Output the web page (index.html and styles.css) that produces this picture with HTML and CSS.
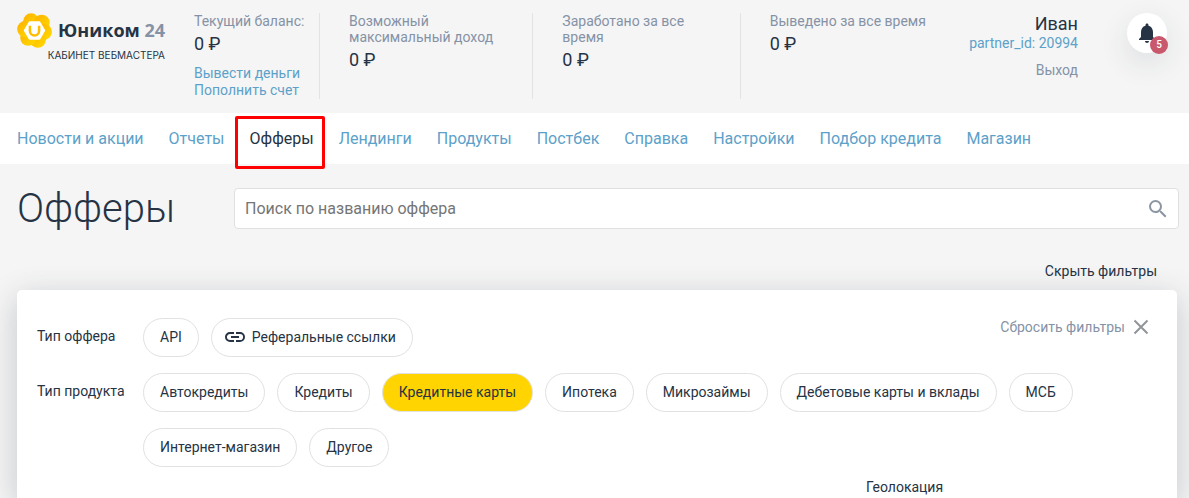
FILE: index.html
```html
<!DOCTYPE html>
<html lang="ru">
<head>
<meta charset="utf-8">
<meta name="viewport" content="width=device-width, initial-scale=1">
<title>Офферы</title>
<link rel="stylesheet" href="styles.css">
</head>
<body>
<div class="page">
  <header class="header">
    <a class="brand" href="#">
      <span class="brand-row">
        <svg class="brand-mark" viewBox="0 0 36 36" aria-hidden="true">
          <defs>
            <linearGradient id="petal" x1="0" y1="0" x2="1" y2="1">
              <stop offset="0" stop-color="#ffb000"/>
              <stop offset="1" stop-color="#ffdc00"/>
            </linearGradient>
          </defs>
          <g fill="url(#petal)">
            <circle cx="18" cy="18" r="15"/>
            <circle cx="14.500" cy="8.500" r="8.200"/>
            <circle cx="25.500" cy="10" r="8.200"/>
            <circle cx="27.700" cy="19.500" r="8.200"/>
            <circle cx="21.500" cy="27.600" r="8.200"/>
            <circle cx="11.500" cy="25.500" r="8.200"/>
            <circle cx="8.300" cy="16.500" r="8.200"/>
          </g>
          <path d="M13 9.500h10l5 8.500-5 8.500H13L8 18z" fill="#fff" stroke="#fff" stroke-width="2" stroke-linejoin="round"/>
          <path d="M13.300 13v5.500a4.700 4.700 0 0 0 9.400 0V13" fill="none" stroke="#ffbd00" stroke-width="2.600"/>
        </svg>
        <span class="brand-name">Юником <span class="brand-num">24</span></span>
      </span>
      <span class="brand-sub">КАБИНЕТ ВЕБМАСТЕРА</span>
    </a>
    <div class="stats">
      <div class="stat">
        <div class="stat-label">Текущий баланс:</div>
        <div class="stat-value">0 ₽</div>
        <div class="stat-links"><a href="#">Вывести деньги</a><a href="#">Пополнить счет</a></div>
      </div>
      <div class="stat">
        <div class="stat-label">Возможный максимальный доход</div>
        <div class="stat-value">0 ₽</div>
      </div>
      <div class="stat">
        <div class="stat-label">Заработано за все время</div>
        <div class="stat-value">0 ₽</div>
      </div>
      <div class="stat">
        <div class="stat-label">Выведено за все время</div>
        <div class="stat-value">0 ₽</div>
      </div>
    </div>
    <div class="user">
      <div class="user-name">Иван</div>
      <a class="user-id" href="#">partner_id: 20994</a>
      <a class="user-exit" href="#">Выход</a>
    </div>
    <button class="bell" type="button" aria-label="Уведомления">
      <svg width="24" height="24" viewBox="0 0 24 24" aria-hidden="true"><path fill="#253344" d="M12 22c1.100 0 2-.9 2-2h-4c0 1.100.9 2 2 2zm6-6v-5c0-3.070-1.630-5.640-4.500-6.320V4c0-.83-.67-1.500-1.500-1.500s-1.500.67-1.500 1.500v.68C7.640 5.360 6 7.920 6 11v5l-2 2v1h16v-1z"/></svg>
      <span class="badge">5</span>
    </button>
  </header>

  <nav class="nav">
    <a href="#">Новости и акции</a>
    <a href="#">Отчеты</a>
    <a class="active" href="#">Офферы</a>
    <a href="#">Лендинги</a>
    <a href="#">Продукты</a>
    <a href="#">Постбек</a>
    <a href="#">Справка</a>
    <a href="#">Настройки</a>
    <a href="#">Подбор кредита</a>
    <a href="#">Магазин</a>
  </nav>

  <main class="main">
    <div class="title-row">
      <h1 class="title">Офферы</h1>
      <form class="search">
        <input class="search-input" type="search" aria-label="Поиск по названию оффера" placeholder="Поиск по названию оффера">
        <button class="search-btn" type="button" aria-label="Найти">
          <svg width="24" height="24" viewBox="0 0 24 24" aria-hidden="true"><path fill="#8c96a2" d="M15.500 14h-.79l-.28-.27A6.471 6.471 0 0 0 16 9.500 6.500 6.500 0 1 0 9.500 16c1.610 0 3.090-.59 4.230-1.570l.27.28v.79l5 4.990L20.490 19l-4.990-5zm-6 0C7.010 14 5 11.990 5 9.500S7.010 5 9.500 5 14 7.010 14 9.500 11.990 14 9.500 14z"/></svg>
        </button>
      </form>
    </div>
    <button class="toggle" type="button">Скрыть фильтры</button>

    <section class="panel">
      <div class="filter-head">
        <div class="filter">
          <div class="filter-label" id="offer-type">Тип оффера</div>
          <div class="chips" role="group" aria-labelledby="offer-type">
            <button class="chip" type="button">API</button>
            <button class="chip chip-icon" type="button">
              <svg width="24" height="24" viewBox="0 0 24 24" aria-hidden="true"><path fill="#253344" d="M3.900 12c0-1.710 1.390-3.100 3.100-3.100h4V7H7a5 5 0 0 0 0 10h4v-1.900H7c-1.710 0-3.100-1.390-3.100-3.100zM8 13h8v-2H8v2zm9-6h-4v1.900h4a3.100 3.100 0 0 1 0 6.200h-4V17h4a5 5 0 0 0 0-10z"/></svg>
              Реферальные ссылки
            </button>
          </div>
        </div>
        <button class="reset" type="button">Сбросить фильтры
          <svg width="16" height="16" viewBox="0 0 16 16" aria-hidden="true"><path d="M1.500 1.500l13 13M14.500 1.500l-13 13" stroke="#8f9599" stroke-width="2" fill="none"/></svg>
        </button>
      </div>
      <div class="filter">
        <div class="filter-label" id="product-type">Тип продукта</div>
        <div class="chips" role="group" aria-labelledby="product-type">
          <button class="chip" type="button">Автокредиты</button>
          <button class="chip" type="button">Кредиты</button>
          <button class="chip chip-on" type="button" aria-pressed="true">Кредитные карты</button>
          <button class="chip" type="button">Ипотека</button>
          <button class="chip" type="button">Микрозаймы</button>
          <button class="chip" type="button">Дебетовые карты и вклады</button>
          <button class="chip" type="button">МСБ</button>
          <button class="chip" type="button">Интернет-магазин</button>
          <button class="chip" type="button">Другое</button>
        </div>
      </div>
      <div class="geo">Геолокация</div>
    </section>
  </main>
</div>
</body>
</html>
```
FILE: styles.css
```css
* { box-sizing: border-box; }

body {
  margin: 0;
  background: #f5f5f5;
  color: #253344;
  font: 14px/16px Roboto, sans-serif;
}

a { color: #5ca1c9; text-decoration: none; }

button {
  margin: 0;
  padding: 0;
  border: 0;
  background: none;
  color: inherit;
  font: inherit;
  cursor: pointer;
}

svg { display: block; flex: none; }

.page {
  display: flex;
  flex-direction: column;
  min-height: 100vh;
}

.header {
  display: flex;
  align-items: flex-start;
  padding: 13px 22px 14px 17px;
}

.brand {
  display: flex;
  flex-direction: column;
  flex: none;
  width: 148px;
  margin-right: 29px;
  color: #253344;
}

.brand-row {
  display: flex;
  align-items: center;
  justify-content: space-between;
}

.brand-mark { width: 35px; height: 35px; }

.brand-name {
  font: 700 18px/35px "Open Sans", sans-serif;
  white-space: nowrap;
}

.brand-num { color: #8592a6; }

.brand-sub {
  font: 10px/14px Inter, sans-serif;
  text-align: right;
  white-space: nowrap;
}

.stats {
  display: grid;
  grid-template-columns: 126px 213fr 207fr 228fr;
  flex: 1;
  min-height: 86px;
}

.stat + .stat { padding: 0 30px 0 29px; }
.stat:not(:last-child) { border-right: 1px solid #e2e3e5; }
.stat:last-child { padding-right: 0; }

.stat-label { color: #8592a6; }
.stat-value { margin-top: 4px; font-size: 18px; line-height: 21px; }

.stat-links {
  display: flex;
  flex-direction: column;
  margin-top: 11px;
  line-height: 17px;
}

.user {
  display: flex;
  flex-direction: column;
  align-items: flex-end;
  margin-right: 49px;
}

.user-name { font-size: 18px; line-height: 22px; }
.user-exit { margin-top: 11px; color: #8592a6; }

.bell {
  position: relative;
  display: grid;
  place-items: center;
  width: 40px;
  height: 40px;
  border-radius: 50%;
  background: #fff;
  box-shadow: 0 10px 30px rgba(37, 51, 68, 0.12);
}

.badge {
  position: absolute;
  right: -1px;
  bottom: -1px;
  width: 18px;
  height: 18px;
  border-radius: 50%;
  background: #c9586c;
  color: #fff;
  font-size: 10px;
  font-weight: 500;
  line-height: 18px;
  text-align: center;
}

.nav {
  display: flex;
  gap: 25px;
  padding: 0 17px;
  background: #fff;
  font-size: 16px;
  line-height: 51px;
  white-space: nowrap;
}

.nav .active { position: relative; color: #253344; }

.nav .active::after {
  content: "";
  position: absolute;
  inset: 3px -11px -5px -15px;
  border: 3px solid #f00;
  border-radius: 2px;
}

.main {
  display: flex;
  flex-direction: column;
  flex: 1;
  padding: 24px 12px 0 17px;
}

.title-row {
  display: flex;
  align-items: center;
  margin-right: -2px;
}

.title {
  flex: none;
  width: 217px;
  margin: 0;
  font-size: 40px;
  font-weight: 300;
  line-height: 41px;
}

.search {
  display: flex;
  align-items: center;
  flex: 1;
  height: 41px;
  padding: 0 8px 0 10px;
  border: 1px solid #dfe0e2;
  border-radius: 4px;
  background: #fff;
}

.search-input {
  flex: 1;
  min-width: 0;
  padding: 0;
  border: 0;
  outline: 0;
  background: none;
  color: inherit;
  font: 16px/20px Roboto, sans-serif;
}

.search-input::placeholder { color: #757575; }

.toggle {
  align-self: flex-end;
  margin: 34px 20px 11px 0;
}

.panel {
  flex: 1;
  padding: 28px 28px 0 20px;
  border-radius: 5px 5px 0 0;
  background: #fff;
  box-shadow: 0 8px 32px rgba(37, 51, 68, 0.24);
}

.filter-head {
  display: flex;
  justify-content: space-between;
  align-items: flex-start;
  margin-bottom: 16px;
}

.filter { display: flex; }
.filter-label { flex: none; width: 106px; padding-top: 10px; }

.chips {
  display: flex;
  flex-wrap: wrap;
  gap: 16px 12px;
}

.chip {
  display: flex;
  align-items: center;
  height: 39px;
  padding: 0 16px 1px;
  border: 1px solid #e1e1e1;
  border-radius: 20px;
}

.chip-icon { gap: 5px; padding-left: 11px; }
.chip-on { background: #ffd400; }

.reset {
  display: flex;
  align-items: center;
  gap: 8px;
  margin-top: 1px;
  color: #8592a6;
}

.geo { margin: 12px 0 0 829px; }
```
